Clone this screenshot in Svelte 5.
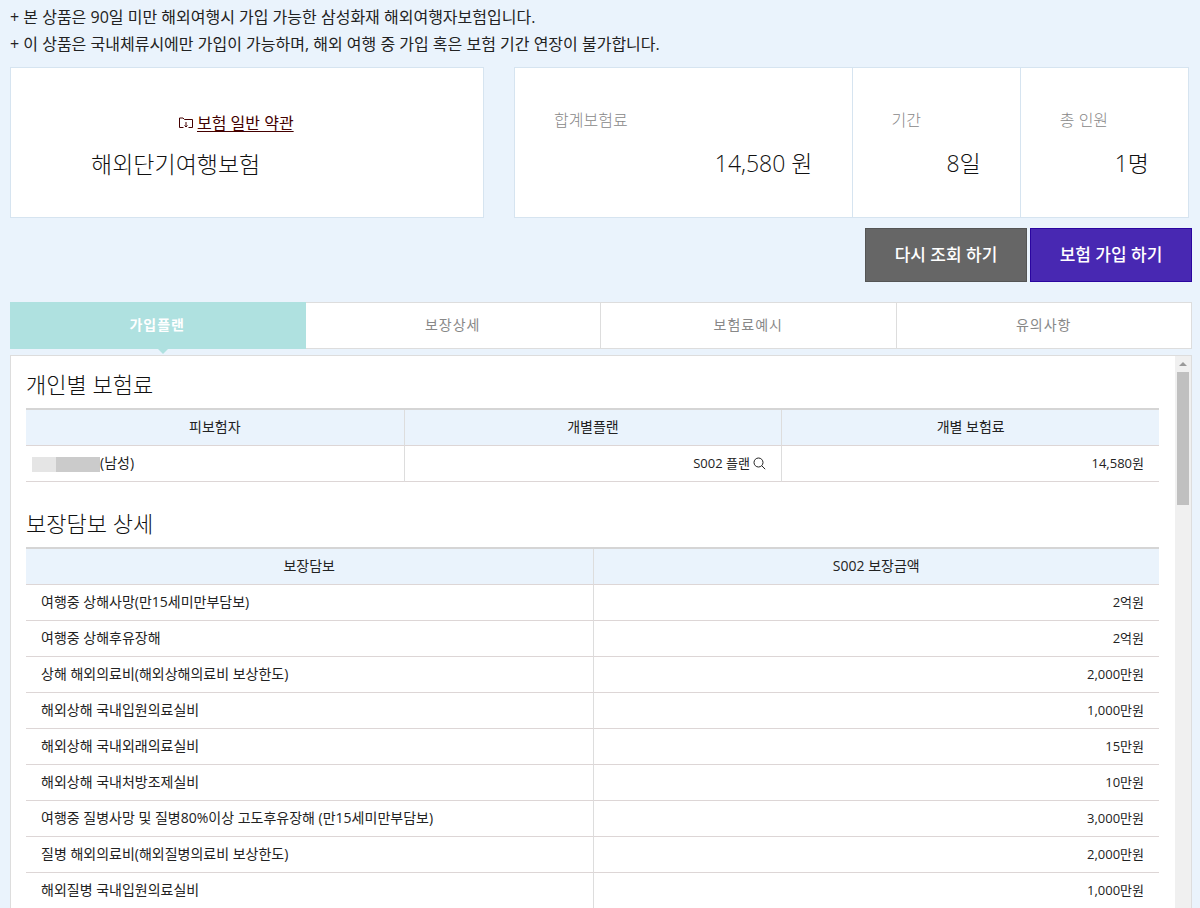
<script lang="ts">
	const notices = [
		'+ 본 상품은 90일 미만 해외여행시 가입 가능한 삼성화재 해외여행자보험입니다.',
		'+ 이 상품은 국내체류시에만 가입이 가능하며, 해외 여행 중 가입 혹은 보험 기간 연장이 불가합니다.'
	];

	const summary = [
		{ label: '합계보험료', value: '14,580 원' },
		{ label: '기간', value: '8일' },
		{ label: '총 인원', value: '1명' }
	];

	const tabs = ['가입플랜', '보장상세', '보험료예시', '유의사항'];

	const coverages = [
		['여행중 상해사망(만15세미만부담보)', '2억원'],
		['여행중 상해후유장해', '2억원'],
		['상해 해외의료비(해외상해의료비 보상한도)', '2,000만원'],
		['해외상해 국내입원의료실비', '1,000만원'],
		['해외상해 국내외래의료실비', '15만원'],
		['해외상해 국내처방조제실비', '10만원'],
		['여행중 질병사망 및 질병80%이상 고도후유장해 (만15세미만부담보)', '3,000만원'],
		['질병 해외의료비(해외질병의료비 보상한도)', '2,000만원'],
		['해외질병 국내입원의료실비', '1,000만원']
	];

	let active = $state(0);
	let scroller: HTMLElement;

	function scrollUp() {
		scroller.scrollBy({ top: -40 });
	}
</script>

<main class="page">
	<div class="notices">
		{#each notices as notice}
			<p>{notice}</p>
		{/each}
	</div>

	<div class="cards">
		<section class="card product">
			<a class="terms" href="#terms">
				<svg width="14" height="12" viewBox="0 0 14 12" aria-hidden="true">
					<path d="M4.500 10.500h-4v-9.500h3.500l1.500 1.500h8v8h-4" />
					<path d="M7 5v5M5.500 8.500 7 10l1.500-1.500" />
				</svg>
				<span>보험 일반 약관</span>
			</a>
			<h1>해외단기여행보험</h1>
		</section>
		<dl class="card summary">
			{#each summary as item}
				<div class="item">
					<dt>{item.label}</dt>
					<dd>{item.value}</dd>
				</div>
			{/each}
		</dl>
	</div>

	<div class="actions">
		<button class="btn retry" type="button">다시 조회 하기</button>
		<button class="btn join" type="button">보험 가입 하기</button>
	</div>

	<div class="tabs" role="tablist">
		{#each tabs as tab, i}
			<button
				class="tab"
				class:active={active === i}
				type="button"
				role="tab"
				aria-selected={active === i}
				onclick={() => (active = i)}
			>
				{tab}
			</button>
		{/each}
	</div>

	<div class="panel">
		<div class="content" bind:this={scroller}>
			<h2>개인별 보험료</h2>
			<table class="persons">
				<thead>
					<tr>
						<th>피보험자</th>
						<th>개별플랜</th>
						<th>개별 보험료</th>
					</tr>
				</thead>
				<tbody>
					<tr>
						<td class="person"><span class="mask"></span>(남성)</td>
						<td class="amount">
							S002 플랜
							<svg class="search" width="13" height="13" viewBox="0 0 13 13" aria-hidden="true">
								<circle cx="5.500" cy="5.500" r="4.500" />
								<path d="m8.700 8.700 3.500 3.500" />
							</svg>
						</td>
						<td class="amount">14,580원</td>
					</tr>
				</tbody>
			</table>

			<h2>보장담보 상세</h2>
			<table>
				<thead>
					<tr>
						<th>보장담보</th>
						<th>S002 보장금액</th>
					</tr>
				</thead>
				<tbody>
					{#each coverages as [name, amount]}
						<tr>
							<td>{name}</td>
							<td class="amount">{amount}</td>
						</tr>
					{/each}
				</tbody>
			</table>
		</div>
		<div class="scrollbar">
			<button class="up" type="button" aria-label="위로" onclick={scrollUp}></button>
			<div class="thumb"></div>
		</div>
	</div>
</main>

<style>
	:global(body) {
		background: #eaf3fc;
	}

	.page {
		box-sizing: border-box;
		display: flex;
		flex-direction: column;
		height: 100vh;
		padding: 4px 8px 0 10px;
		overflow: hidden;
		color: #222;
		font-family: 'Open Sans', 'Noto Sans CJK KR', sans-serif;
		font-size: 14px;
	}

	p,
	h1,
	h2,
	dl,
	dd {
		margin: 0;
		font-weight: 300;
	}

	button {
		padding: 0 0 3px;
		border: 0;
		font-family: inherit;
		cursor: pointer;
	}

	.notices {
		margin-bottom: 9px;
	}

	.notices p {
		font-size: 16px;
		font-weight: 400;
		line-height: 27px;
	}

	.cards {
		display: grid;
		grid-template-columns: 474fr 675fr;
		gap: 30px;
		padding-right: 3px;
	}

	.card {
		box-sizing: border-box;
		height: 151px;
		background: #fff;
		border: 1px solid #d6e4f0;
	}

	.product {
		padding: 40px 80px 0;
	}

	.terms {
		display: flex;
		align-items: center;
		gap: 4px;
		padding-left: 88px;
		color: #400;
		font-size: 16px;
		line-height: 30px;
		text-decoration: none;
	}

	.terms span {
		text-decoration: underline;
		text-underline-offset: 2px;
	}

	.terms svg,
	.search {
		fill: none;
		stroke: currentColor;
	}

	.product h1,
	.item dd {
		color: #111;
		font-size: 23px;
		line-height: 56px;
	}

	.product h1 {
		line-height: 52px;
	}

	.summary {
		display: grid;
		grid-template-columns: 2fr 1fr 1fr;
	}

	.item {
		padding: 37px 39px 0;
	}

	.item + .item {
		border-left: 1px solid #d6e4f0;
	}

	.item dt {
		color: #888;
		font-size: 16px;
		font-weight: 300;
		line-height: 30px;
	}

	.item dd {
		text-align: right;
	}

	.actions {
		display: flex;
		justify-content: flex-end;
		gap: 3px;
		margin: 10px 0 20px;
	}

	.btn {
		width: 162px;
		height: 54px;
		color: #fff;
		font-size: 17px;
		font-weight: 500;
	}

	.retry {
		background: #666;
		border: 1px solid #555;
	}

	.join {
		background: #4828b2;
		border: 1px solid #2a05a0;
	}

	.tabs {
		display: grid;
		grid-template-columns: repeat(4, 1fr);
		margin-bottom: 6px;
	}

	.tab {
		position: relative;
		height: 47px;
		background: #fff;
		border: 1px solid #ddd;
		border-left-width: 0;
		color: #888;
		font-size: 14px;
		letter-spacing: 1px;
	}

	.tab.active {
		background: #afe1e0;
		border-color: #afe1e0;
		color: #fff;
		font-weight: 700;
	}

	.tab.active::after {
		position: absolute;
		top: 100%;
		left: 50%;
		border: 6px solid transparent;
		border-top-color: #afe1e0;
		border-bottom: 0;
		content: '';
	}

	.panel {
		display: flex;
		flex: 1;
		min-height: 0;
		background: #fff;
		border: 1px solid #ddd;
		border-bottom: 0;
	}

	.content {
		flex: 1;
		padding: 0 16px 0 15px;
		overflow-y: auto;
		scrollbar-width: none;
	}

	h2 {
		padding: 8px 0 4px;
		color: #111;
		font-size: 22px;
		line-height: 40px;
	}

	table {
		width: 100%;
		border-top: 2px solid #d5d5d5;
		border-spacing: 0;
		table-layout: fixed;
	}

	.persons {
		margin-bottom: 13px;
	}

	th,
	td {
		box-sizing: border-box;
		height: 36px;
		padding: 0 15px 1px;
		border-bottom: 1px solid #ddd6d6;
		font-weight: 400;
		line-height: 20px;
		text-align: left;
	}

	th {
		background: #eaf3fc;
		text-align: center;
	}

	th + th,
	td + td {
		border-left: 1px solid #ddd;
	}

	.amount {
		font-size: 13px;
		text-align: right;
	}

	.person {
		padding-left: 6px;
	}

	.mask {
		display: inline-block;
		width: 68px;
		height: 15px;
		background: linear-gradient(to right, #e5e5e5 24px, #cbcbcb 24px);
		vertical-align: middle;
	}

	.search {
		vertical-align: -2px;
	}

	.scrollbar {
		display: flex;
		flex-direction: column;
		align-items: center;
		width: 16px;
		background: #f0f0f0;
	}

	.up {
		display: grid;
		place-items: center;
		width: 16px;
		height: 16px;
		padding: 0;
		background: none;
	}

	.up::before {
		border: 4px solid transparent;
		border-top: 0;
		border-bottom-color: #999;
		content: '';
	}

	.thumb {
		width: 12px;
		height: 133px;
		background: #c0c0c0;
	}
</style>
